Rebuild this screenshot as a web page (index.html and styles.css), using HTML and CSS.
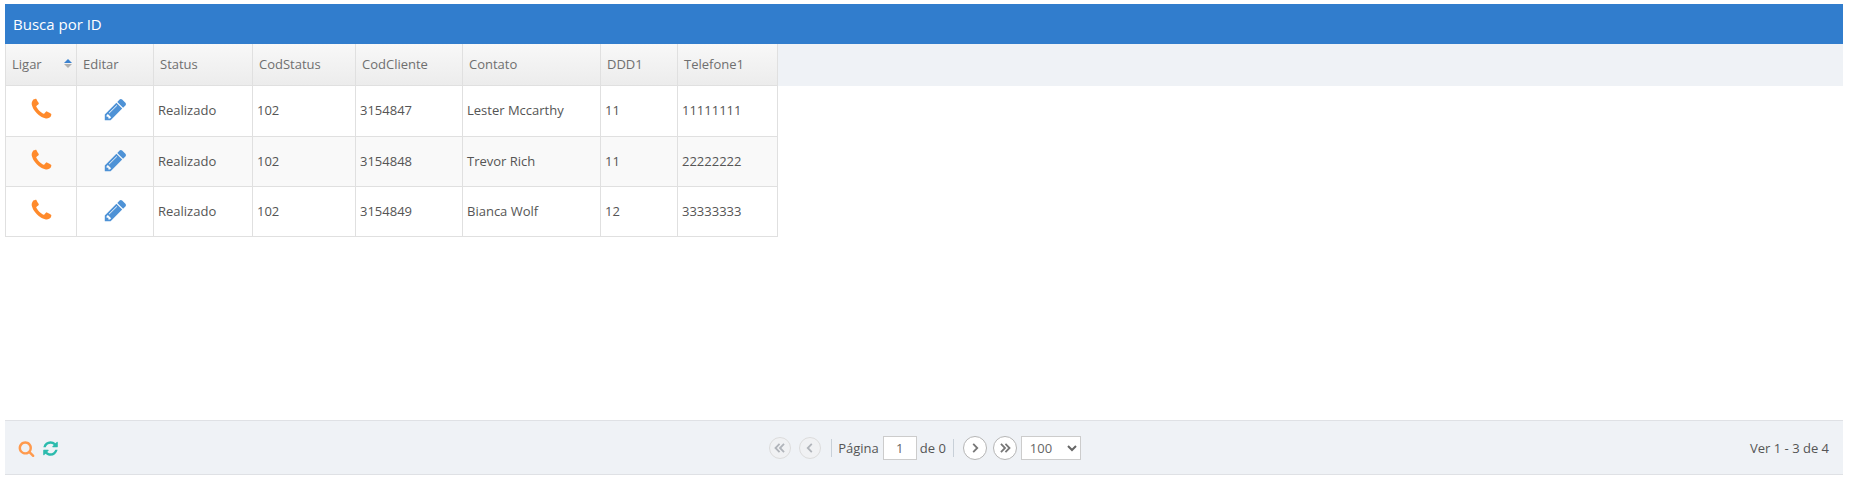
FILE: index.html
```html
<!DOCTYPE html>
<html lang="pt">
<head>
<meta charset="utf-8">
<title>Busca por ID</title>
<link rel="stylesheet" href="styles.css">
</head>
<body>
<svg class="defs" aria-hidden="true">
  <symbol id="i-phone" viewBox="0 0 1792 1792"><path d="M1600 1240q0 27-10 70.5t-21 68.5q-21 50-122 106-94 51-186 51-27 0-53-3.5t-57.5-12.5-47-14.5-55.5-20.5-49-18q-98-35-175-83-127-79-264-216t-216-264q-48-77-83-175-3-9-18-49t-20.5-55.5-14.5-47-12.5-57.5-3.5-53q0-92 51-186 56-101 106-122 25-11 68.5-21t70.5-10q14 0 21 3 18 6 53 76 11 19 30 54t35 63.5 31 53.5q3 4 17.5 25t21.5 35.5 7 28.5q0 20-28.5 50t-62 55-62 53-28.5 46q0 9 5 22.5t8.5 20.5 14 24 11.5 19q76 137 174 235t235 174q2 1 19 11.5t24 14 20.5 8.5 22.5 5q18 0 46-28.5t53-62 55-62 50-28.5q14 0 28.5 7t35.5 21.5 25 17.5q25 15 53.5 31t63.5 35 54 30q70 35 76 53 3 7 3 21z"/></symbol>
  <symbol id="i-pencil" viewBox="0 0 1792 1792"><path d="M491 1536l91-91-235-235-91 91v107h128v128h107zm523-928q0-22-22-22-10 0-17 7l-542 542q-7 7-7 17 0 22 22 22 10 0 17-7l542-542q7-7 7-17zm-54-192l416 416-832 832h-416v-416zm683 96q0 53-37 90l-166 166-416-416 166-165q36-38 90-38 53 0 91 38l235 234q37 39 37 91z"/></symbol>
</svg>
<div class="grid">
  <div class="caption">Busca por ID</div>
  <div class="head-band">
    <table class="cols">
      <colgroup><col class="c1"><col class="c2"><col class="c3"><col class="c4"><col class="c5"><col class="c6"><col class="c7"><col class="c8"></colgroup>
      <thead>
        <tr>
          <th class="first"><span class="th-sort">Ligar<span class="sort"><i class="up"></i><i class="down"></i></span></span></th>
          <th>Editar</th><th>Status</th><th>CodStatus</th><th>CodCliente</th><th>Contato</th><th>DDD1</th><th>Telefone1</th>
        </tr>
      </thead>
    </table>
  </div>
  <div class="body">
    <table class="cols">
      <colgroup><col class="c1"><col class="c2"><col class="c3"><col class="c4"><col class="c5"><col class="c6"><col class="c7"><col class="c8"></colgroup>
      <tbody>
        <tr class="top">
          <td class="first icon-cell"><svg class="ico phone"><use href="#i-phone"/></svg></td>
          <td class="icon-cell"><svg class="ico pencil"><use href="#i-pencil"/></svg></td>
          <td>Realizado</td><td>102</td><td>3154847</td><td>Lester Mccarthy</td><td>11</td><td>11111111</td>
        </tr>
        <tr class="alt">
          <td class="first icon-cell"><svg class="ico phone"><use href="#i-phone"/></svg></td>
          <td class="icon-cell"><svg class="ico pencil"><use href="#i-pencil"/></svg></td>
          <td>Realizado</td><td>102</td><td>3154848</td><td>Trevor Rich</td><td>11</td><td>22222222</td>
        </tr>
        <tr>
          <td class="first icon-cell"><svg class="ico phone"><use href="#i-phone"/></svg></td>
          <td class="icon-cell"><svg class="ico pencil"><use href="#i-pencil"/></svg></td>
          <td>Realizado</td><td>102</td><td>3154849</td><td>Bianca Wolf</td><td>12</td><td>33333333</td>
        </tr>
      </tbody>
    </table>
  </div>
  <div class="pager">
    <div class="pager-left">
      <svg class="tool search" viewBox="0 0 1792 1792"><path d="M1216 832q0-185-131.5-316.5t-316.5-131.5-316.5 131.5-131.5 316.5 131.5 316.5 316.5 131.5 316.5-131.5 131.5-316.5zm512 832q0 52-38 90t-90 38q-54 0-90-38l-343-342q-179 124-399 124-143 0-273.5-55.5t-225-150-150-225-55.5-273.5 55.5-273.5 150-225 225-150 273.5-55.5 273.5 55.5 225 150 150 225 55.5 273.5q0 220-124 399l343 343q37 37 37 90z"/></svg>
      <svg class="tool refresh" viewBox="0 0 1792 1792"><path d="M1639 1056q0 5-1 7-64 268-268 434.5t-478 166.5q-146 0-282.5-55t-243.5-157l-129 129q-19 19-45 19t-45-19-19-45v-448q0-26 19-45t45-19h448q26 0 45 19t19 45-19 45l-137 137q71 66 161 102t187 36q134 0 250-65t186-179q11-17 53-117 8-23 30-23h192q13 0 22.5 9.5t9.5 22.5zm25-800v448q0 26-19 45t-45 19h-448q-26 0-45-19t-19-45 19-45l138-138q-148-137-349-137-134 0-250 65t-186 179q-11 17-53 117-8 23-30 23h-199q-13 0-22.5-9.5t-9.5-22.5v-7q65-268 270-434.5t480-166.5q146 0 284 55.5t245 156.5l130-129q19-19 45-19t45 19 19 45z"/></svg>
    </div>
    <div class="pager-center">
      <span class="pg off"><svg viewBox="0 0 20 20"><path d="M9.5 5.5 5 10l4.500 4.500M14.500 5.500 10 10l4.500 4.500"/></svg></span>
      <span class="pg off"><svg viewBox="0 0 20 20"><path d="M12 5.500 7.500 10l4.500 4.500"/></svg></span>
      <span class="sep sep-a"></span>
      <span class="label">Página</span>
      <input class="page-input" type="text" value="1" aria-label="Página">
      <span class="label">de 0</span>
      <span class="sep sep-b"></span>
      <span class="pg on"><svg viewBox="0 0 20 20"><path d="M8 5.500 12.500 10 8 14.500"/></svg></span>
      <span class="pg on last"><svg viewBox="0 0 20 20"><path d="M5.500 5.500 10 10l-4.500 4.500M10.500 5.500 15 10l-4.500 4.500"/></svg></span>
      <select class="page-size" aria-label="Linhas"><option>100</option></select>
    </div>
    <div class="pager-right">Ver 1 - 3 de 4</div>
  </div>
</div>
</body>
</html>
```
FILE: styles.css
```css
* { box-sizing: border-box; }
html, body { height: 100%; }
body {
  margin: 0;
  padding: 4px 7px 3px 5px;
  font-family: "Open Sans", "Liberation Sans", sans-serif;
  font-size: 13px;
  color: #555;
  background: #fff;
  overflow: hidden;
}
.defs { display: none; }
.grid { display: flex; flex-direction: column; height: 100%; }
.caption {
  height: 40px;
  line-height: 40px;
  padding-left: 8px;
  font-size: 15px;
  color: #fff;
  background: #317dcd;
  flex: none;
}
.head-band { background: #eff2f6; flex: none; height: 42px; }
.body { flex: 1; min-height: 0; }
.cols { border-collapse: separate; border-spacing: 0; table-layout: fixed; width: 773px; }
.c1 { width: 72px; }
.c2 { width: 77px; }
.c3 { width: 99px; }
.c4 { width: 103px; }
.c5 { width: 107px; }
.c6 { width: 138px; }
.c7 { width: 77px; }
.c8 { width: 100px; }
th {
  height: 42px;
  padding: 0 0 2px 6px;
  text-align: left;
  font-weight: 500;
  color: #6f6f6f;
  background: linear-gradient(#f8f8f8, #ececec);
  border-right: 1px solid #e0e0e0;
  border-bottom: 1px solid #e0e0e0;
}
th.first, td.first { border-left: 1px solid #e0e0e0; }
td {
  height: 50px;
  padding: 0 0 2px 4px;
  color: #555;
  border-right: 1px solid #e0e0e0;
  border-bottom: 1px solid #e0e0e0;
}
.top td { height: 51px; }
.alt td { background: #f9f9f9; }
td.icon-cell { padding: 0 0 3px; text-align: center; }
.ico { display: inline-block; width: 25px; height: 25px; vertical-align: middle; }
.phone { fill: #ff8a2b; }
.pencil { fill: #4e92d6; }
.th-sort { display: flex; justify-content: space-between; align-items: center; padding-right: 4px; }
.sort { display: flex; flex-direction: column; gap: 1px; }
.sort i { display: block; width: 0; height: 0; border-left: 4px solid transparent; border-right: 4px solid transparent; }
.sort .up { border-bottom: 4px solid #3b82cf; }
.sort .down { border-top: 4px solid #b0b0b0; }
.pager {
  flex: none;
  height: 55px;
  display: grid;
  grid-template-columns: 1fr auto 1fr;
  align-items: center;
  padding: 0 14px;
  background: #eff2f6;
  border-top: 1px solid #dfe1e5;
  border-bottom: 1px solid #dfe1e5;
}
.pager-left { display: flex; align-items: center; gap: 7px; margin: 2px 0 0 -1px; }
.tool { display: block; width: 17px; height: 17px; }
.search { fill: #ff9a4d; }
.refresh { fill: #2bbbad; }
.pager-center { display: flex; align-items: center; margin-left: 2px; color: #555; }
.pager-right { text-align: right; color: #555; }
.pg {
  display: flex;
  align-items: center;
  justify-content: center;
  border-radius: 50%;
}
.pg svg { display: block; width: 18px; height: 18px; fill: none; stroke-width: 2; }
.pg.off { width: 22px; height: 22px; margin-right: 8px; background: #f0f1f3; border: 1px solid #dcdcdc; }
.pg.off svg { stroke: #b0b4ba; }
.pg.on { width: 24px; height: 24px; margin-right: 6px; background: #fff; border: 1px solid #b5b5b5; }
.pg.on.last { margin-right: 4px; }
.pg.on svg { stroke: #777; }
.sep { width: 1px; height: 18px; background: #c8d0d8; }
.sep-a { margin: 0 6px 0 2px; }
.sep-b { margin: 0 9px 0 7px; }
.label { line-height: 24px; }
.page-input {
  width: 34px;
  height: 24px;
  margin: 0 3px 0 4px;
  padding: 0;
  border: 1px solid #ccc;
  background: #fff;
  text-align: center;
  font: 13px "Open Sans", sans-serif;
  color: #666;
}
.page-size {
  width: 60px;
  height: 24px;
  padding: 0 0 0 4px;
  border: 1px solid #ccc;
  border-radius: 0;
  background: #fff;
  font: 13px "Open Sans", sans-serif;
  color: #666;
}
```
